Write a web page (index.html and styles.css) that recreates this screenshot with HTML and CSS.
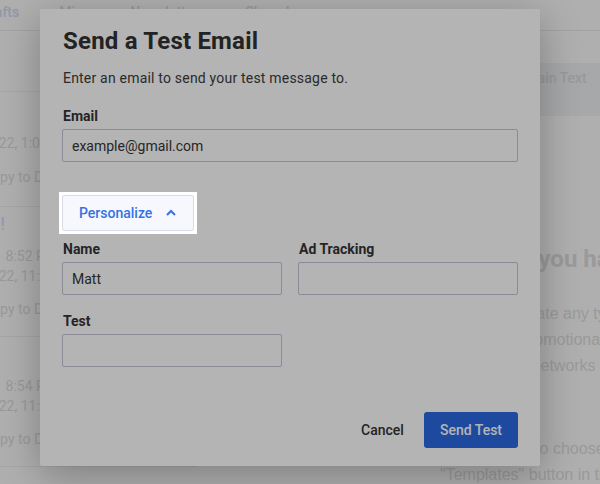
FILE: index.html
```html
<!DOCTYPE html>
<html lang="en">
<head>
<meta charset="utf-8">
<title>Send a Test Email</title>
<link rel="stylesheet" href="styles.css">
</head>
<body>
<div class="app">
  <nav class="topbar">
    <span class="tab active">Drafts</span>
    <span class="tab">Mine</span>
    <span class="tab">Newsletters</span>
    <span class="tab">Shared</span>
  </nav>
  <div class="main">
    <aside class="drafts">
      <div class="search"></div>
      <ul class="draft-list">
        <li class="draft first">
          <div class="meta">2022, 1:03 PM</div>
          <div class="link">Copy to Drafts</div>
        </li>
        <li class="draft">
          <div class="draft-title">Hi!</div>
          <div class="meta">at&nbsp;&nbsp;&nbsp;8:52 PM</div>
          <div class="meta">2022, 11:03 AM</div>
          <div class="link">Copy to Drafts</div>
        </li>
        <li class="draft">
          <div class="draft-title">Hi</div>
          <div class="meta">at&nbsp;&nbsp;&nbsp;8:54 PM</div>
          <div class="meta">2022, 11:24 AM</div>
          <div class="link">Copy to Drafts</div>
        </li>
      </ul>
    </aside>
    <section class="editor"></section>
    <section class="preview">
      <div class="view-tabs">
        <span class="view-tab">HTML</span>
        <span class="view-tab">Plain Text</span>
      </div>
      <div class="thumbs"></div>
      <h2 class="empty-title">It seems you haven't created any templates yet</h2>
      <p class="empty-text">You could create any type of email<br>such as all promotional offers,<br>news, social networks posts</p>
      <p class="empty-text second">Pick a layout to choose it or use the<br>"Templates" button in the top menu.</p>
    </section>
  </div>
</div>

<div class="modal" role="dialog" aria-labelledby="modal-title">
  <h1 class="modal-title" id="modal-title">Send a Test Email</h1>
  <p class="modal-sub">Enter an email to send your test message to.</p>
  <label class="field-label" for="email">Email</label>
  <input class="input" id="email" type="text" value="example@gmail.com">

  <div class="spot">
    <button class="personalize" type="button">
      <span>Personalize</span>
      <svg class="chev" width="10" height="7" viewBox="0 0 10 7" aria-hidden="true"><polyline points="1,6 5,2 9,6" fill="none" stroke="currentColor" stroke-width="2"/></svg>
    </button>
  </div>

  <div class="fields">
    <div class="field">
      <label class="field-label" for="name">Name</label>
      <input class="input" id="name" type="text" value="Matt">
    </div>
    <div class="field">
      <label class="field-label" for="ad">Ad Tracking</label>
      <input class="input" id="ad" type="text" value="">
    </div>
    <div class="field">
      <label class="field-label" for="test">Test</label>
      <input class="input" id="test" type="text" value="">
    </div>
  </div>

  <div class="footer">
    <button class="btn-text" type="button">Cancel</button>
    <button class="btn-primary" type="button">Send Test</button>
  </div>
</div>
<div class="scrim"></div>
</body>
</html>
```
FILE: styles.css
```css
* { box-sizing: border-box; }

body {
  margin: 0;
  width: 600px;
  height: 484px;
  overflow: hidden;
  position: relative;
  background: #f8f8f8;
  font-family: Roboto, "Noto Sans", sans-serif;
}

/* ---------- background page ---------- */
.app {
  display: flex;
  flex-direction: column;
  height: 484px;
  width: 600px;
  overflow: hidden;
}

.topbar {
  display: flex;
  align-items: flex-start;
  height: 31px;
  flex: 0 0 31px;
  padding-top: 2px;
  margin-left: -19px;
  gap: 40px;
  border-bottom: 1px solid #e6e6e6;
  font-size: 14px;
  line-height: 20px;
  font-weight: 500;
  color: #d8d8d8;
}
.tab.active { color: #cfd7ef; }

.main {
  display: flex;
  flex: 1;
}

.drafts {
  flex: 0 0 230px;
  margin-left: -33px;
  padding-left: 16px;
  font-size: 14px;
  line-height: 20px;
  color: #d9d9d9;
  white-space: nowrap;
}
.search {
  height: 61px;
  border-bottom: 1px solid #ebebeb;
}
.draft-list {
  list-style: none;
  margin: 0;
  padding: 0;
}
.draft {
  display: flex;
  flex-direction: column;
  padding: 5px 0 17px;
  border-bottom: 1px solid #ebebeb;
}
.draft.first { padding-top: 41px; height: 115px; }
.draft.first .link { margin-top: 14px; }
.draft-title {
  font-size: 18px;
  line-height: 24px;
  font-weight: 500;
  color: #d3dcf6;
  margin-bottom: 10px;
}
.link { margin-top: 13px; }

.editor { flex: 0 0 223px; }

.preview {
  flex: 1;
  padding-left: 20px;
  color: #dadada;
}
.view-tabs {
  display: flex;
  gap: 47px;
  height: 53px;
  margin-top: 32px;
  margin-left: -20px;
  padding: 5px 0 0 20px;
  background: #eceef1;
  font-size: 14px;
  line-height: 20px;
  font-weight: 500;
}
.thumbs { height: 127px; }
.empty-title {
  margin: 0;
  font-size: 24px;
  line-height: 32px;
  font-weight: 700;
  white-space: nowrap;
}
.empty-text {
  margin: 26px 0 0;
  font-family: "Liberation Sans", Arial, sans-serif;
  font-size: 16px;
  line-height: 26px;
  white-space: nowrap;
}
.empty-text.second { margin-top: 57px; }

/* ---------- modal ---------- */
.modal {
  position: absolute;
  left: 40px;
  top: 9px;
  width: 500px;
  padding: 18px 22px 18px;
  background: #fff;
  border-radius: 2px;
  box-shadow: 0 10px 40px rgba(0, 0, 0, 0.28);
  display: flex;
  flex-direction: column;
  align-items: flex-start;
}

.modal-title {
  margin: 0 0 0 1px;
  font-size: 24px;
  line-height: 28px;
  font-weight: 700;
  letter-spacing: 0.2px;
  color: #323232;
}
.modal-sub {
  margin: 13px 0 0 1px;
  font-size: 14px;
  line-height: 20px;
  color: #3c3c3c;
  letter-spacing: 0.2px;
}

.field-label {
  display: block;
  margin: 0 0 0 1px;
  font-size: 14px;
  line-height: 20px;
  font-weight: 700;
  color: #353535;
}
.modal-sub + .field-label { margin-top: 18px; }

.input {
  display: block;
  width: 100%;
  height: 33px;
  margin-top: 3px;
  padding: 0 9px;
  border: 1px solid #c5c6d6;
  border-radius: 2px;
  background: #fff;
  font-family: Roboto, "Noto Sans", sans-serif;
  font-size: 14px;
  color: #363636;
  outline: none;
}

.spot {
  position: relative;
  z-index: 20;
  margin: 30px 0 0 -3px;
  padding: 3px;
  background: #fff;
}
.personalize {
  display: flex;
  align-items: center;
  gap: 14px;
  height: 36px;
  padding: 0 17px 0 16px;
  border: 1px solid #d8dce8;
  border-radius: 2px;
  background: #f6f8fd;
  font-family: Roboto, "Noto Sans", sans-serif;
  font-size: 14px;
  font-weight: 500;
  color: #3572e3;
  cursor: pointer;
}
.chev { display: block; margin-top: -2px; }

.fields {
  display: grid;
  grid-template-columns: 220px 220px;
  column-gap: 16px;
  row-gap: 16px;
  width: 456px;
  margin-top: 5px;
}

.footer {
  display: flex;
  align-items: center;
  justify-content: flex-end;
  gap: 4px;
  width: 100%;
  margin-top: 45px;
}
.btn-text {
  height: 36px;
  padding: 0 16px;
  border: 0;
  background: transparent;
  font-family: Roboto, "Noto Sans", sans-serif;
  font-size: 14px;
  font-weight: 500;
  color: #333;
  cursor: pointer;
}
.btn-primary {
  height: 36px;
  padding: 0 16px;
  border: 0;
  border-radius: 3px;
  background: #2a6ae2;
  font-family: Roboto, "Noto Sans", sans-serif;
  font-size: 14px;
  font-weight: 500;
  color: #fff;
  cursor: pointer;
}

.scrim {
  position: absolute;
  inset: 0;
  z-index: 10;
  background: rgba(0, 0, 0, 0.294);
}
```
